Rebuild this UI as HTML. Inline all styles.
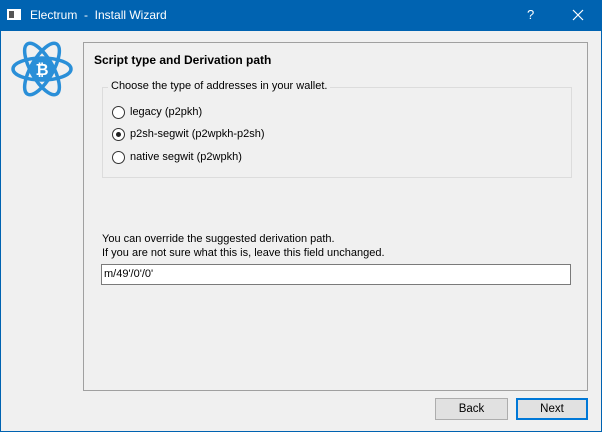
<!DOCTYPE html><html><head><style>
body{margin:0;width:602px;height:432px;overflow:hidden;background:#0063b1;font-family:"Liberation Sans",sans-serif;font-size:11px;color:#000}
.win{position:absolute;left:1px;top:31px;width:600px;height:400px;background:#f0f0f0}
.t{position:absolute;white-space:nowrap}
.radio{position:absolute;width:11px;height:11px;border:1px solid #333;border-radius:50%;background:#fff}
.btn{position:absolute;height:20px;top:398px;background:#e1e1e1;border:1px solid #adadad;text-align:center;line-height:20px;font-size:11.5px}
</style></head><body>
<div class="t" style="left:7px;top:9px;width:14px;height:11px;background:#fff;border:0"><div style="position:absolute;left:2px;top:2px;width:5px;height:7px;background:#555"></div></div>
<div class="t" style="left:30px;top:8px;color:#fff;font-size:12px">Electrum &nbsp;- &nbsp;Install Wizard</div>
<div class="t" style="left:527px;top:7px;color:#fff;font-size:13px">?</div>
<svg class="t" style="left:572px;top:9px" width="12" height="12"><path d="M1 1L11 11M11 1L1 11" stroke="#fff" stroke-width="1.2"/></svg>
<div class="win"></div>
<svg class="t" style="left:10px;top:40px" width="64" height="58" viewBox="0 0 64 58">
<g fill="none" stroke="#2a8fd8" stroke-width="3.5">
<ellipse cx="32" cy="29" rx="29" ry="11"/>
<ellipse cx="32" cy="29" rx="29" ry="11" transform="rotate(60 32 29)"/>
<ellipse cx="32" cy="29" rx="29" ry="11" transform="rotate(-60 32 29)"/>
</g>
<circle cx="32" cy="29" r="11" fill="#2a8fd8"/>
<text x="32" y="35" text-anchor="middle" font-family="Liberation Sans" font-weight="bold" font-size="16" fill="#fff">₿</text>
</svg>
<div class="t" style="left:83px;top:42px;width:503px;height:347px;border:1px solid #a0a0a0;background:#f0f0f0"></div>
<div class="t" style="left:94px;top:53px;font-weight:bold;font-size:12px">Script type and Derivation path</div>
<div class="t" style="left:102px;top:87px;width:468px;height:89px;border:1px solid #dcdcdc"></div>
<div class="t" style="left:108px;top:80px;background:#f0f0f0;padding:0 3px">Choose the type of addresses in your wallet.</div>
<div class="radio" style="left:112px;top:106px"></div><div class="t" style="left:130px;top:106px">legacy (p2pkh)</div>
<div class="radio" style="left:112px;top:128px"><div style="position:absolute;left:3px;top:3px;width:5px;height:5px;border-radius:50%;background:#222"></div></div><div class="t" style="left:130px;top:128px">p2sh-segwit (p2wpkh-p2sh)</div>
<div class="radio" style="left:112px;top:151px"></div><div class="t" style="left:130px;top:151px">native segwit (p2wpkh)</div>
<div class="t" style="left:102px;top:233px">You can override the suggested derivation path.</div>
<div class="t" style="left:102px;top:247px">If you are not sure what this is, leave this field unchanged.</div>
<div class="t" style="left:101px;top:264px;width:466px;height:19px;background:#fff;border:1px solid #7a7a7a;line-height:19px;padding-left:2px">m/49'/0'/0'</div>
<div class="btn" style="left:435px;width:71px">Back</div>
<div class="btn" style="left:516px;width:68px;border:2px solid #0078d7;height:18px;line-height:18px">Next</div>
</body></html>
